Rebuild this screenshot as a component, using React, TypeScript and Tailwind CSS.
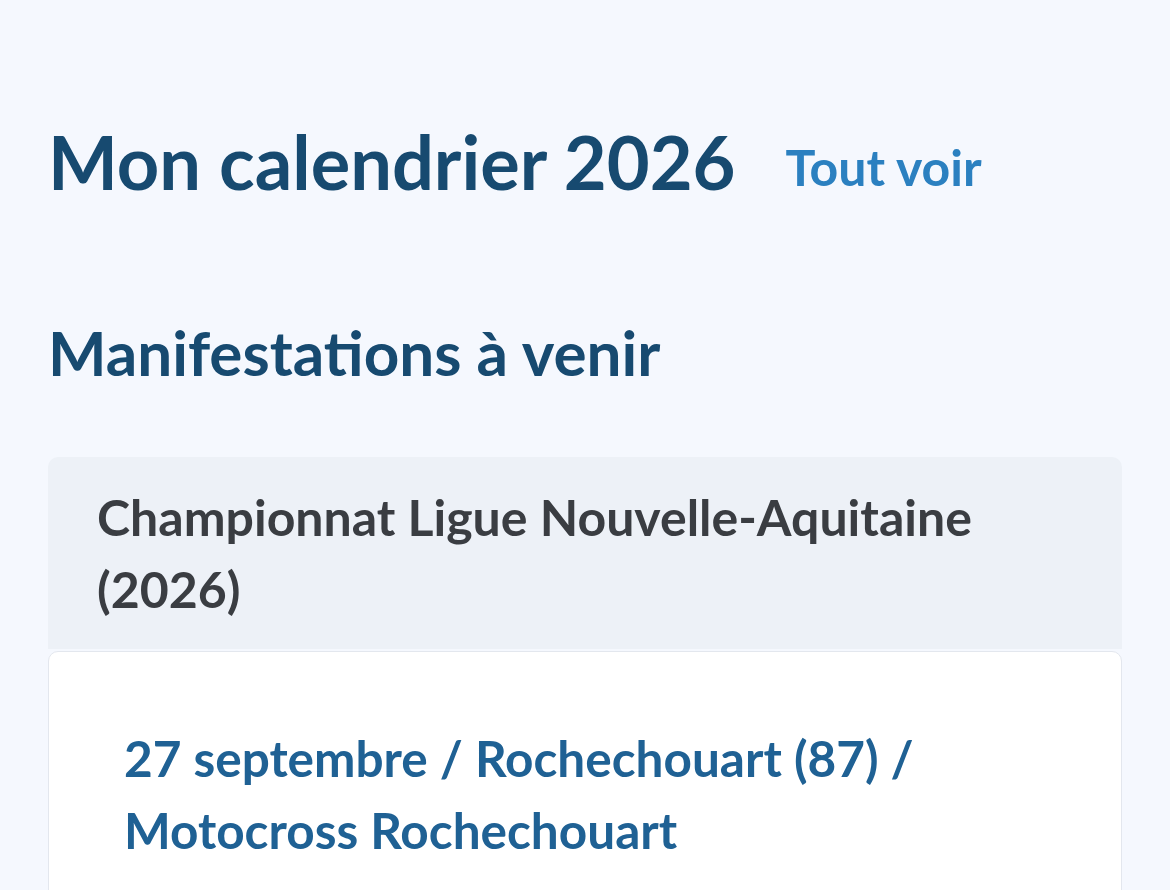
export default function App() {
  return (
    <div className="min-h-[890px] bg-[#f5f8fe] px-[48px] pt-[114px] font-['Lato','Noto_Sans',sans-serif]">
      {/* Title row */}
      <div className="flex items-baseline gap-[50px]">
        <h1 className="text-[74px] leading-[96px] font-bold text-[#174a70]">
          Mon calendrier 2026
        </h1>
        <a href="#" className="-translate-y-[4px] text-[50px] font-bold text-[#2b80c0]">
          Tout voir
        </a>
      </div>

      <h2 className="mt-[102px] text-[62px] leading-[80px] font-bold text-[#174a70]">
        Manifestations à venir
      </h2>

      {/* Championship block */}
      <div className="mt-[65px]">
        <div className="rounded-t-[10px] bg-[#edf1f7] px-[49px] py-[24px]">
          <h3 className="text-[50px] leading-[72px] font-bold text-[#3a3d42]">
            Championnat Ligue Nouvelle-Aquitaine (2026)
          </h3>
        </div>
        <div className="mt-[2px] rounded-[10px] border border-[#e3e7ee] bg-white px-[75px] pt-[70px] pb-[60px]">
          <a href="#" className="block max-w-[840px] text-[49.5px] leading-[72px] font-bold text-[#1f6194]">
            27 septembre / Rochechouart (87) / Motocross Rochechouart
          </a>
        </div>
      </div>
    </div>
  );
}
